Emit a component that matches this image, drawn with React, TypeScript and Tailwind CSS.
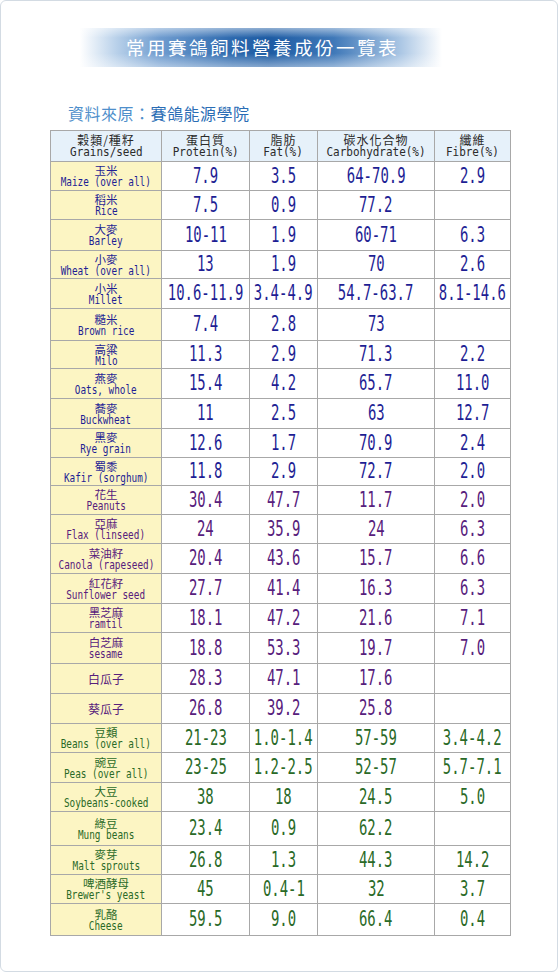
type Row = {
  zh: string;
  en?: string;
  h: string;
  v: [string, string, string, string];
};

type Section = { color: string; rows: Row[] };

const sections: Section[] = [
  {
    color: "text-[#1e1e94]",
    rows: [
      { zh: "玉米", en: "Maize (over all)", h: "h-[29px]", v: ["7.9", "3.5", "64-70.9", "2.9"] },
      { zh: "稻米", en: "Rice", h: "h-[29px]", v: ["7.5", "0.9", "77.2", ""] },
      { zh: "大麥", en: "Barley", h: "h-[31px]", v: ["10-11", "1.9", "60-71", "6.3"] },
      { zh: "小麥", en: "Wheat (over all)", h: "h-[28px]", v: ["13", "1.9", "70", "2.6"] },
      { zh: "小米", en: "Millet", h: "h-[30px]", v: ["10.6-11.9", "3.4-4.9", "54.7-63.7", "8.1-14.6"] },
      { zh: "糙米", en: "Brown rice", h: "h-[32px]", v: ["7.4", "2.8", "73", ""] },
      { zh: "高粱", en: "Milo", h: "h-[28px]", v: ["11.3", "2.9", "71.3", "2.2"] },
      { zh: "燕麥", en: "Oats, whole", h: "h-[30px]", v: ["15.4", "4.2", "65.7", "11.0"] },
      { zh: "蕎麥", en: "Buckwheat", h: "h-[30px]", v: ["11", "2.5", "63", "12.7"] },
      { zh: "黑麥", en: "Rye grain", h: "h-[29px]", v: ["12.6", "1.7", "70.9", "2.4"] },
      { zh: "蜀黍", en: "Kafir (sorghum)", h: "h-[28px]", v: ["11.8", "2.9", "72.7", "2.0"] },
    ],
  },
  {
    color: "text-[#57207c]",
    rows: [
      { zh: "花生", en: "Peanuts", h: "h-[29px]", v: ["30.4", "47.7", "11.7", "2.0"] },
      { zh: "亞麻", en: "Flax (linseed)", h: "h-[29px]", v: ["24", "35.9", "24", "6.3"] },
      { zh: "菜油籽", en: "Canola (rapeseed)", h: "h-[30px]", v: ["20.4", "43.6", "15.7", "6.6"] },
      { zh: "紅花籽", en: "Sunflower seed", h: "h-[30px]", v: ["27.7", "41.4", "16.3", "6.3"] },
      { zh: "黑芝麻", en: "ramtil", h: "h-[29px]", v: ["18.1", "47.2", "21.6", "7.1"] },
      { zh: "白芝麻", en: "sesame", h: "h-[31px]", v: ["18.8", "53.3", "19.7", "7.0"] },
      { zh: "白瓜子", h: "h-[30px]", v: ["28.3", "47.1", "17.6", ""] },
      { zh: "葵瓜子", h: "h-[30px]", v: ["26.8", "39.2", "25.8", ""] },
    ],
  },
  {
    color: "text-[#2a6a27]",
    rows: [
      { zh: "豆類", en: "Beans (over all)", h: "h-[29px]", v: ["21-23", "1.0-1.4", "57-59", "3.4-4.2"] },
      { zh: "豌豆", en: "Peas (over all)", h: "h-[30px]", v: ["23-25", "1.2-2.5", "52-57", "5.7-7.1"] },
      { zh: "大豆", en: "Soybeans-cooked", h: "h-[29px]", v: ["38", "18", "24.5", "5.0"] },
      { zh: "綠豆", en: "Mung beans", h: "h-[34px]", v: ["23.4", "0.9", "62.2", ""] },
      { zh: "麥芽", en: "Malt sprouts", h: "h-[29px]", v: ["26.8", "1.3", "44.3", "14.2"] },
      { zh: "啤酒酵母", en: "Brewer's yeast", h: "h-[29px]", v: ["45", "0.4-1", "32", "3.7"] },
      { zh: "乳酪", en: "Cheese", h: "h-[32px]", v: ["59.5", "9.0", "66.4", "0.4"] },
    ],
  },
];

const headers = [
  { zh: "穀類/種籽", en: "Grains/seed" },
  { zh: "蛋白質", en: "Protein(%)" },
  { zh: "脂肪", en: "Fat(%)" },
  { zh: "碳水化合物", en: "Carbohydrate(%)" },
  { zh: "纖維", en: "Fibre(%)" },
];

const cjk = "font-['Noto_Sans_CJK_TC','Noto_Sans_CJK_JP',sans-serif]";
const mono = "font-['DejaVu_Sans_Mono','Liberation_Mono',monospace]";
const cell = "border border-[#a8a8a8] p-0 align-middle";

function Num({ value }: { value: string }) {
  return (
    <div className="flex justify-center">
      <span className={`${mono} inline-block scale-x-[0.68] whitespace-nowrap text-[20.5px] leading-none`}>
        {value}
      </span>
    </div>
  );
}

export default function App() {
  return (
    <div className="h-[972px] w-[558px] rounded-md border border-[#d3dbe3] bg-white">
      <div className="relative ml-[79px] mt-[27px] h-[39px] w-[362px] bg-[linear-gradient(90deg,#ffffff_0%,#b9d1ea_10%,#6f9ccf_22%,#2d69ae_42%,#1d5ba3_52%,#3f78b8_70%,#a7c4e3_88%,#ffffff_100%)]">
        <div className="absolute inset-0 bg-[linear-gradient(180deg,rgba(255,255,255,0.5)_0%,rgba(255,255,255,0)_25%,rgba(255,255,255,0)_65%,rgba(255,255,255,0.45)_100%)]" />
        <div className={`${cjk} relative flex h-full items-center justify-center pl-[3px] text-[18.5px] tracking-[2.5px] text-white`}>
          常用賽鴿飼料營養成份一覽表
        </div>
      </div>

      <div className={`${cjk} ml-[67px] mt-[36px] text-[16px] leading-[20px] tracking-[0.5px]`}>
        <span className="text-[#4f8fcb]">資料來原：</span>
        <span className="text-[#2a6db5]">賽鴿能源學院</span>
      </div>

      <table className="ml-[49px] mt-[7px] w-[460px] table-fixed border-collapse">
        <colgroup>
          <col className="w-[111px]" />
          <col className="w-[88px]" />
          <col className="w-[68px]" />
          <col className="w-[117px]" />
          <col className="w-[76px]" />
        </colgroup>
        <thead>
          <tr className="h-[31px] bg-[#e6f1fa] text-[#2b2b2b]">
            {headers.map((hd) => (
              <th key={hd.en} className={`${cell} font-normal`}>
                <div className={`${cjk} text-[12px] leading-[13px] tracking-[1px]`}>{hd.zh}</div>
                <div className="flex justify-center">
                  <span className={`${mono} inline-block scale-x-[0.9] whitespace-nowrap text-[12.2px] leading-[13px]`}>
                    {hd.en}
                  </span>
                </div>
              </th>
            ))}
          </tr>
        </thead>
        <tbody>
          {sections.map((sec) =>
            sec.rows.map((r) => (
              <tr key={r.zh} className={`${r.h} ${sec.color}`}>
                <td className={`${cell} bg-[#fcf5c3]`}>
                  <div className={`${cjk} text-center ${r.en ? "text-[11.5px] leading-[12px]" : "text-[12px] leading-[14px]"}`}>
                    {r.zh}
                  </div>
                  {r.en && (
                    <div className="flex justify-center">
                      <span className={`${mono} inline-block scale-x-[0.78] whitespace-pre text-[12px] leading-[12px]`}>
                        {r.en}
                      </span>
                    </div>
                  )}
                </td>
                {r.v.map((val, i) => (
                  <td key={i} className={`${cell} bg-white`}>
                    <Num value={val} />
                  </td>
                ))}
              </tr>
            ))
          )}
        </tbody>
      </table>
    </div>
  );
}
